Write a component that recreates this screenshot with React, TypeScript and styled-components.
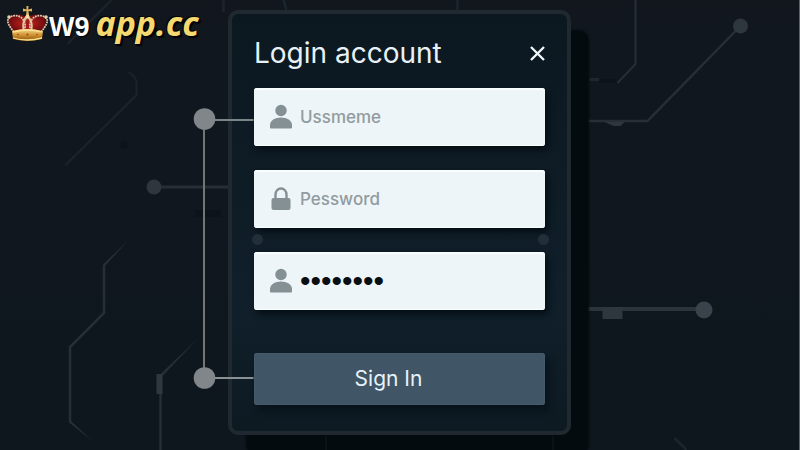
import React from "react";
import styled, { createGlobalStyle } from "styled-components";

const GlobalStyle = createGlobalStyle`
  * { box-sizing: border-box; }
  body {
    margin: 0;
    background: #10171e;
    font-family: Inter, Roboto, sans-serif;
  }
`;

const Page = styled.main`
  position: relative;
  display: grid;
  grid-template-columns: 1fr minmax(0, 343px) 1fr;
  align-items: start;
  min-height: 100vh;
  overflow: hidden;
  background: linear-gradient(#12171e, #0e171e);
  border-right: 1px solid #5c6266;
`;

const Backdrop = styled.svg`
  position: absolute;
  inset: 0;
  width: 100%;
  height: 100%;
`;

const Connectors = styled(Backdrop)`
  z-index: 2;
  pointer-events: none;
`;

const Brand = styled.a`
  position: relative;
  z-index: 3;
  display: flex;
  align-items: center;
  padding: 3px 0 0 6px;
  color: #fff;
  text-decoration: none;
  white-space: nowrap;
`;

const Crown = styled.svg`
  flex: none;
  width: 43px;
  height: 38px;
`;

const BrandMark = styled.span`
  padding-top: 8px;
  font: bold 27px/32px "Liberation Sans", sans-serif;
  text-shadow: 1px 1px 1px #000;
`;

const BrandDomain = styled.span`
  margin-left: 6px;
  font: italic bold 34px/40px "Noto Sans", "Open Sans", sans-serif;
  color: #f4d870;
  text-shadow: 1px 1px 0 #000, 2px 2px 1px #000, -1px -1px 1px #000;
`;

const Card = styled.form`
  position: relative;
  z-index: 1;
  grid-column: 2;
  display: flex;
  flex-direction: column;
  margin: 10px 0 15px;
  padding: 19px 22px 26px;
  border: 4px solid #20292f;
  border-radius: 10px;
  background: linear-gradient(#0c1820, #101f2a 70%, #0d1a22);
  box-shadow: 18px 20px 2px #030b0e;
`;

const CardHeader = styled.header`
  display: flex;
  align-items: center;
  justify-content: space-between;
  margin-bottom: 15px;
`;

const Title = styled.h1`
  margin: 0;
  font-size: 28px;
  font-weight: 400;
  line-height: 40px;
  color: #e8f1f5;
`;

const CloseButton = styled.button`
  display: flex;
  padding: 0;
  border: 0;
  background: none;
  color: #f0f8fb;
`;

const Fields = styled.div`
  display: flex;
  flex-direction: column;
  gap: 24px;
`;

const Field = styled.label`
  display: flex;
  align-items: center;
  gap: 7px;
  height: 58px;
  padding: 0 15px;
  border-radius: 3px;
  background: #edf5f8;
  box-shadow: inset 0 2px 1px #fafeff, inset 0 -1px 1px #fafeff, 3px 4px 6px #040e14;
  color: #849093;

  svg {
    flex: none;
  }
`;

const Input = styled.input<{ $masked?: boolean }>`
  flex: 1;
  min-width: 0;
  padding: 0;
  border: 0;
  outline: 0;
  background: none;
  color: #080e12;
  font-family: ${(p) => (p.$masked ? '"Liberation Sans", sans-serif' : "inherit")};
  font-size: ${(p) => (p.$masked ? "30px" : "17px")};
  font-weight: ${(p) => (p.$masked ? 400 : 500)};
  line-height: 32px;

  &::placeholder {
    color: #929b9f;
    opacity: 1;
  }
`;

const Terminals = styled.div`
  position: absolute;
  top: 220px;
  left: 20px;
  right: 18px;
  display: flex;
  justify-content: space-between;
`;

const Terminal = styled.span`
  width: 11px;
  height: 11px;
  border-radius: 50%;
  background: #222e38;
`;

const SignIn = styled.button`
  height: 52px;
  margin-top: 43px;
  padding: 0 22px 0 0;
  border: 0;
  border-radius: 3px;
  background: #405565;
  box-shadow: inset 0 0 2px #526b7c, 4px 6px 6px #08131a;
  color: #e6f2fa;
  font: 400 21px/32px Inter, sans-serif;
`;

const UserIcon = () => (
  <svg width="24" height="26" viewBox="0 0 24 26" fill="currentColor" aria-hidden="true">
    <circle cx="12" cy="6.500" r="5.700" />
    <path d="M1 23.500v-2.500c0-4.500 5-7.500 11-7.500s11 3 11 7.500v2.500q0 1-1 1H2q-1 0-1-1Z" />
  </svg>
);

const LockIcon = () => (
  <svg width="24" height="26" viewBox="0 0 24 26" fill="currentColor" aria-hidden="true">
    <path d="M6.500 13V8.500a5.500 6 0 0 1 11 0V13" fill="none" stroke="currentColor" strokeWidth="2.400" />
    <rect x="2.500" y="12" width="19" height="12" rx="2" />
  </svg>
);

const CrownIcon = () => (
  <Crown viewBox="0 0 43 38" aria-hidden="true">
    <defs>
      <linearGradient id="gold" x2="0" y2="1">
        <stop offset="0" stopColor="#f4dc98" />
        <stop offset="0.5" stopColor="#cf9430" />
        <stop offset="1" stopColor="#8a4f0c" />
      </linearGradient>
      <radialGradient id="velvet">
        <stop offset="0" stopColor="#c9251f" />
        <stop offset="1" stopColor="#6f0b0e" />
      </radialGradient>
    </defs>
    <path d="M7 28C3 22 1 18 3 14c4-5 12-4 18-1 7-3 15-4 18 1 2 4 0 8-4 14Z" fill="url(#velvet)" />
    <path d="M17 28C15 20 17 14 21 11c5 3 7 9 5 17Z" fill="#e0c596" />
    <path d="M18.500 27c-1-6 0-10 3-13 3 3 4 7 3 13Z" fill="#a81a1a" />
    <g fill="none" stroke="#d9c9b0" strokeWidth="1.800" strokeDasharray="1.800 0.800">
      <path d="M8 28C3 22 0 17 3 14c4-4 12-3 15 3 2 3 1 8 0 10" />
      <path d="M35 28c5-6 8-11 5-14-4-4-12-3-15 3-2 3-1 8 0 10" />
    </g>
    <path d="M6 27q15-4 31 0l-1 8q-14 4-29 0Z" fill="url(#gold)" />
    <path d="M7 28q15-4 29 0M7 34q14 4 29 0" fill="none" stroke="#ffe08a" strokeWidth="1.300" />
    <g fill="#c92a22">
      <circle cx="12" cy="30.500" r="0.800" />
      <circle cx="21.500" cy="30.500" r="1" />
      <circle cx="31" cy="30.500" r="0.800" />
    </g>
    <path d="M20.500 2h2l-.3 3.500L26 4.500v3l-3.500-.5.500 5h-3l.500-5-3.500.5v-3l3.500 1Z" fill="#dfb45c" />
    <circle cx="21.500" cy="12.500" r="2" fill="#f4dda0" />
    <circle cx="3" cy="13" r="1.800" fill="#e5d2ab" />
    <circle cx="40" cy="13" r="1.800" fill="#e5d2ab" />
  </Crown>
);

const CircuitTraces = () => (
  <Backdrop viewBox="0 0 800 450" preserveAspectRatio="xMidYMid slice" aria-hidden="true">
    <g fill="none" stroke="#262f36" strokeWidth="2.500">
      <path d="M129 72q8 5 8 11v12L66 165M112 0 68 44" stroke="#1b2429" strokeWidth="2" />
      <path d="M104.500 265v48l-34 34v75" />
      <path d="M161 374v76" />
      <path d="M154 187h76" strokeWidth="3" />
      <path d="M636 0v64l-18 19" strokeWidth="2" />
      <path d="M588 121h60l92-94" />
      <path d="M588 309h116" strokeWidth="4" stroke="#2b343b" />
      <path d="M224 0v12M284 0l3 10M458 0v10M675 438l12 12" stroke="#1b252c" />
    </g>
    <g fill="#262f36">
      <path d="M129 240l-23.500 26-2-1.500Z" />
      <path d="M69.500 422.500l2-1.500L93 441Z" />
      <path d="M199 338l-36 38-3-1Z" />
    </g>
    <g fill="#2e363e">
      <circle cx="154.500" cy="187" r="7.500" />
      <circle cx="741" cy="26" r="7.500" />
      <circle cx="704.500" cy="310" r="8.500" fill="#3a434b" />
      <path d="M157 374h6v20h-6ZM603 307h20v12h-20ZM605 122h20l-4 4h-7Z" />
      <path d="M590 78h10v3h-10Z" fill="#1e272d" />
    </g>
    <g fill="#0c131a">
      <circle cx="125" cy="145" r="4" />
      <path d="M195 210h26v7h-26ZM600 79h17v4h-17Z" />
    </g>
  </Backdrop>
);

const ConnectorLines = () => (
  <Connectors viewBox="0 0 800 450" preserveAspectRatio="xMidYMid slice" aria-hidden="true">
    <path d="M254 120h-50" stroke="#7b8588" strokeWidth="2" />
    <path d="M204.500 119v259" stroke="#727679" strokeWidth="2" />
    <path d="M204 378h50" stroke="#8a9192" strokeWidth="2" />
    <g fill="#81868a">
      <circle cx="205" cy="119" r="10.800" />
      <circle cx="205" cy="378" r="10.800" />
    </g>
    <path d="M326.500 436v14M553.500 436v14" stroke="#111b20" strokeWidth="1" />
  </Connectors>
);

export default function App() {
  return (
    <>
      <GlobalStyle />
      <Page>
        <CircuitTraces />
        <Brand href="#" aria-label="W9 app.cc">
          <CrownIcon />
          <BrandMark>W9</BrandMark>
          <BrandDomain>app.cc</BrandDomain>
        </Brand>
        <Card onSubmit={(e) => e.preventDefault()}>
          <CardHeader>
            <Title>Login account</Title>
            <CloseButton type="button" aria-label="Close">
              <svg width="15" height="16" viewBox="0 0 15 16" stroke="currentColor" strokeWidth="2.300" aria-hidden="true">
                <path d="M1 2l13 13M14 2 1 15" />
              </svg>
            </CloseButton>
          </CardHeader>
          <Fields>
            <Field>
              <UserIcon />
              <Input type="text" placeholder="Ussmeme" aria-label="Ussmeme" />
            </Field>
            <Field>
              <LockIcon />
              <Input type="text" placeholder="Pessword" aria-label="Pessword" />
            </Field>
            <Field>
              <UserIcon />
              <Input $masked type="password" defaultValue="password" aria-label="Password value" />
            </Field>
          </Fields>
          <Terminals>
            <Terminal />
            <Terminal />
          </Terminals>
          <SignIn type="submit">Sign In</SignIn>
        </Card>
        <ConnectorLines />
      </Page>
    </>
  );
}
